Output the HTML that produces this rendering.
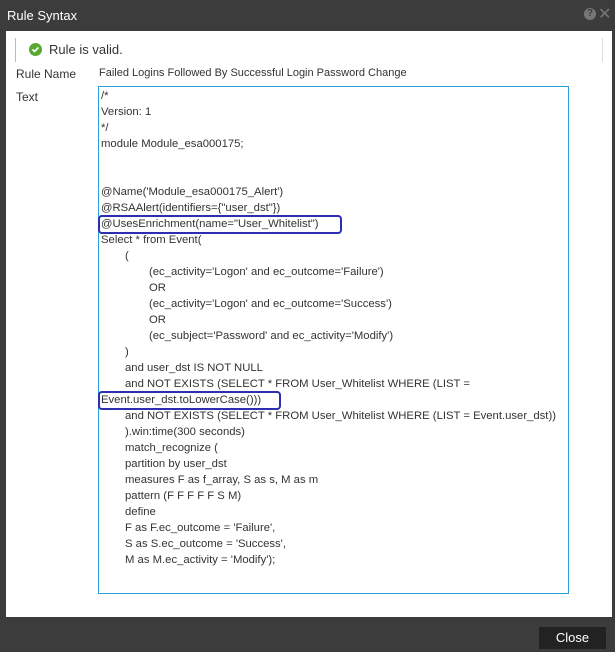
<!DOCTYPE html><html><head><style>
body{margin:0;width:615px;height:652px;background:#3c3c3c;font-family:"Liberation Sans",sans-serif;position:relative;overflow:hidden}
.t{position:absolute;left:7px;top:8px;color:#fff;font-size:13px}
.p{position:absolute;left:6px;top:31px;width:606px;height:586px;background:#fff}
.st{position:absolute;left:15px;top:38px;width:586px;height:24px;border-left:1px solid #bbb;border-right:1px solid #ddd}
.ic{position:absolute;left:13px;top:5px;width:13px;height:13px;border-radius:50%;background:#5aa832}
.lb{position:absolute;font-size:12px;color:#333}
.ta{position:absolute;left:98px;top:86px;width:471px;height:508px;border:1px solid #29a0d8;font-size:11.3px;color:#333;line-height:16px;padding:1px 0 0 2px;box-sizing:border-box;white-space:pre}
.a{padding-left:24px}.b{padding-left:48px}
.ov{position:absolute;border:2px solid #2b2fb0;border-radius:4px}
.btn{position:absolute;left:539px;top:627px;width:67px;height:22px;background:#222;color:#fff;font-size:13px;text-align:center;line-height:22px}
</style></head><body>
<div class="t">Rule Syntax</div>
<div style="position:absolute;left:584px;top:8px;width:12px;height:12px;border-radius:50%;background:#777;color:#3c3c3c;font-size:10px;font-weight:bold;text-align:center;line-height:12px">?</div>
<div style="position:absolute;left:598px;top:4px;color:#777;font-size:16px">✕</div>
<div class="p"></div>
<div class="st"><div class="ic"><svg width="13" height="13"><path d="M3.5 6.5l2 2 4-4" stroke="#fff" stroke-width="1.6" fill="none"/></svg></div><span style="position:absolute;left:33px;top:4px;font-size:13px;color:#333">Rule is valid.</span></div>
<div class="lb" style="left:16px;top:67px">Rule Name</div>
<div class="lb" style="left:99px;top:67px;font-size:11px">Failed Logins Followed By Successful Login Password Change</div>
<div class="lb" style="left:16px;top:90px">Text</div>
<div class="ta"><div>/*</div><div>Version: 1</div><div>*/</div><div>module Module_esa000175;</div><div> </div><div> </div><div>@Name('Module_esa000175_Alert')</div><div>@RSAAlert(identifiers={"user_dst"})</div><div>@UsesEnrichment(name="User_Whitelist")</div><div>Select * from Event(</div><div class="a">(</div><div class="b">(ec_activity='Logon' and ec_outcome='Failure')</div><div class="b">OR</div><div class="b">(ec_activity='Logon' and ec_outcome='Success')</div><div class="b">OR</div><div class="b">(ec_subject='Password' and ec_activity='Modify')</div><div class="a">)</div><div class="a">and user_dst IS NOT NULL</div><div class="a">and NOT EXISTS (SELECT * FROM User_Whitelist WHERE (LIST =</div><div>Event.user_dst.toLowerCase()))</div><div class="a">and NOT EXISTS (SELECT * FROM User_Whitelist WHERE (LIST = Event.user_dst))</div><div class="a">).win:time(300 seconds)</div><div class="a">match_recognize (</div><div class="a">partition by user_dst</div><div class="a">measures F as f_array, S as s, M as m</div><div class="a">pattern (F F F F F S M)</div><div class="a">define</div><div class="a">F as F.ec_outcome = 'Failure',</div><div class="a">S as S.ec_outcome = 'Success',</div><div class="a">M as M.ec_activity = 'Modify');</div></div>
<div class="ov" style="left:98px;top:215px;width:240px;height:15px"></div>
<div class="ov" style="left:98px;top:391px;width:179px;height:15px"></div>
<div class="btn">Close</div>
</body></html>
